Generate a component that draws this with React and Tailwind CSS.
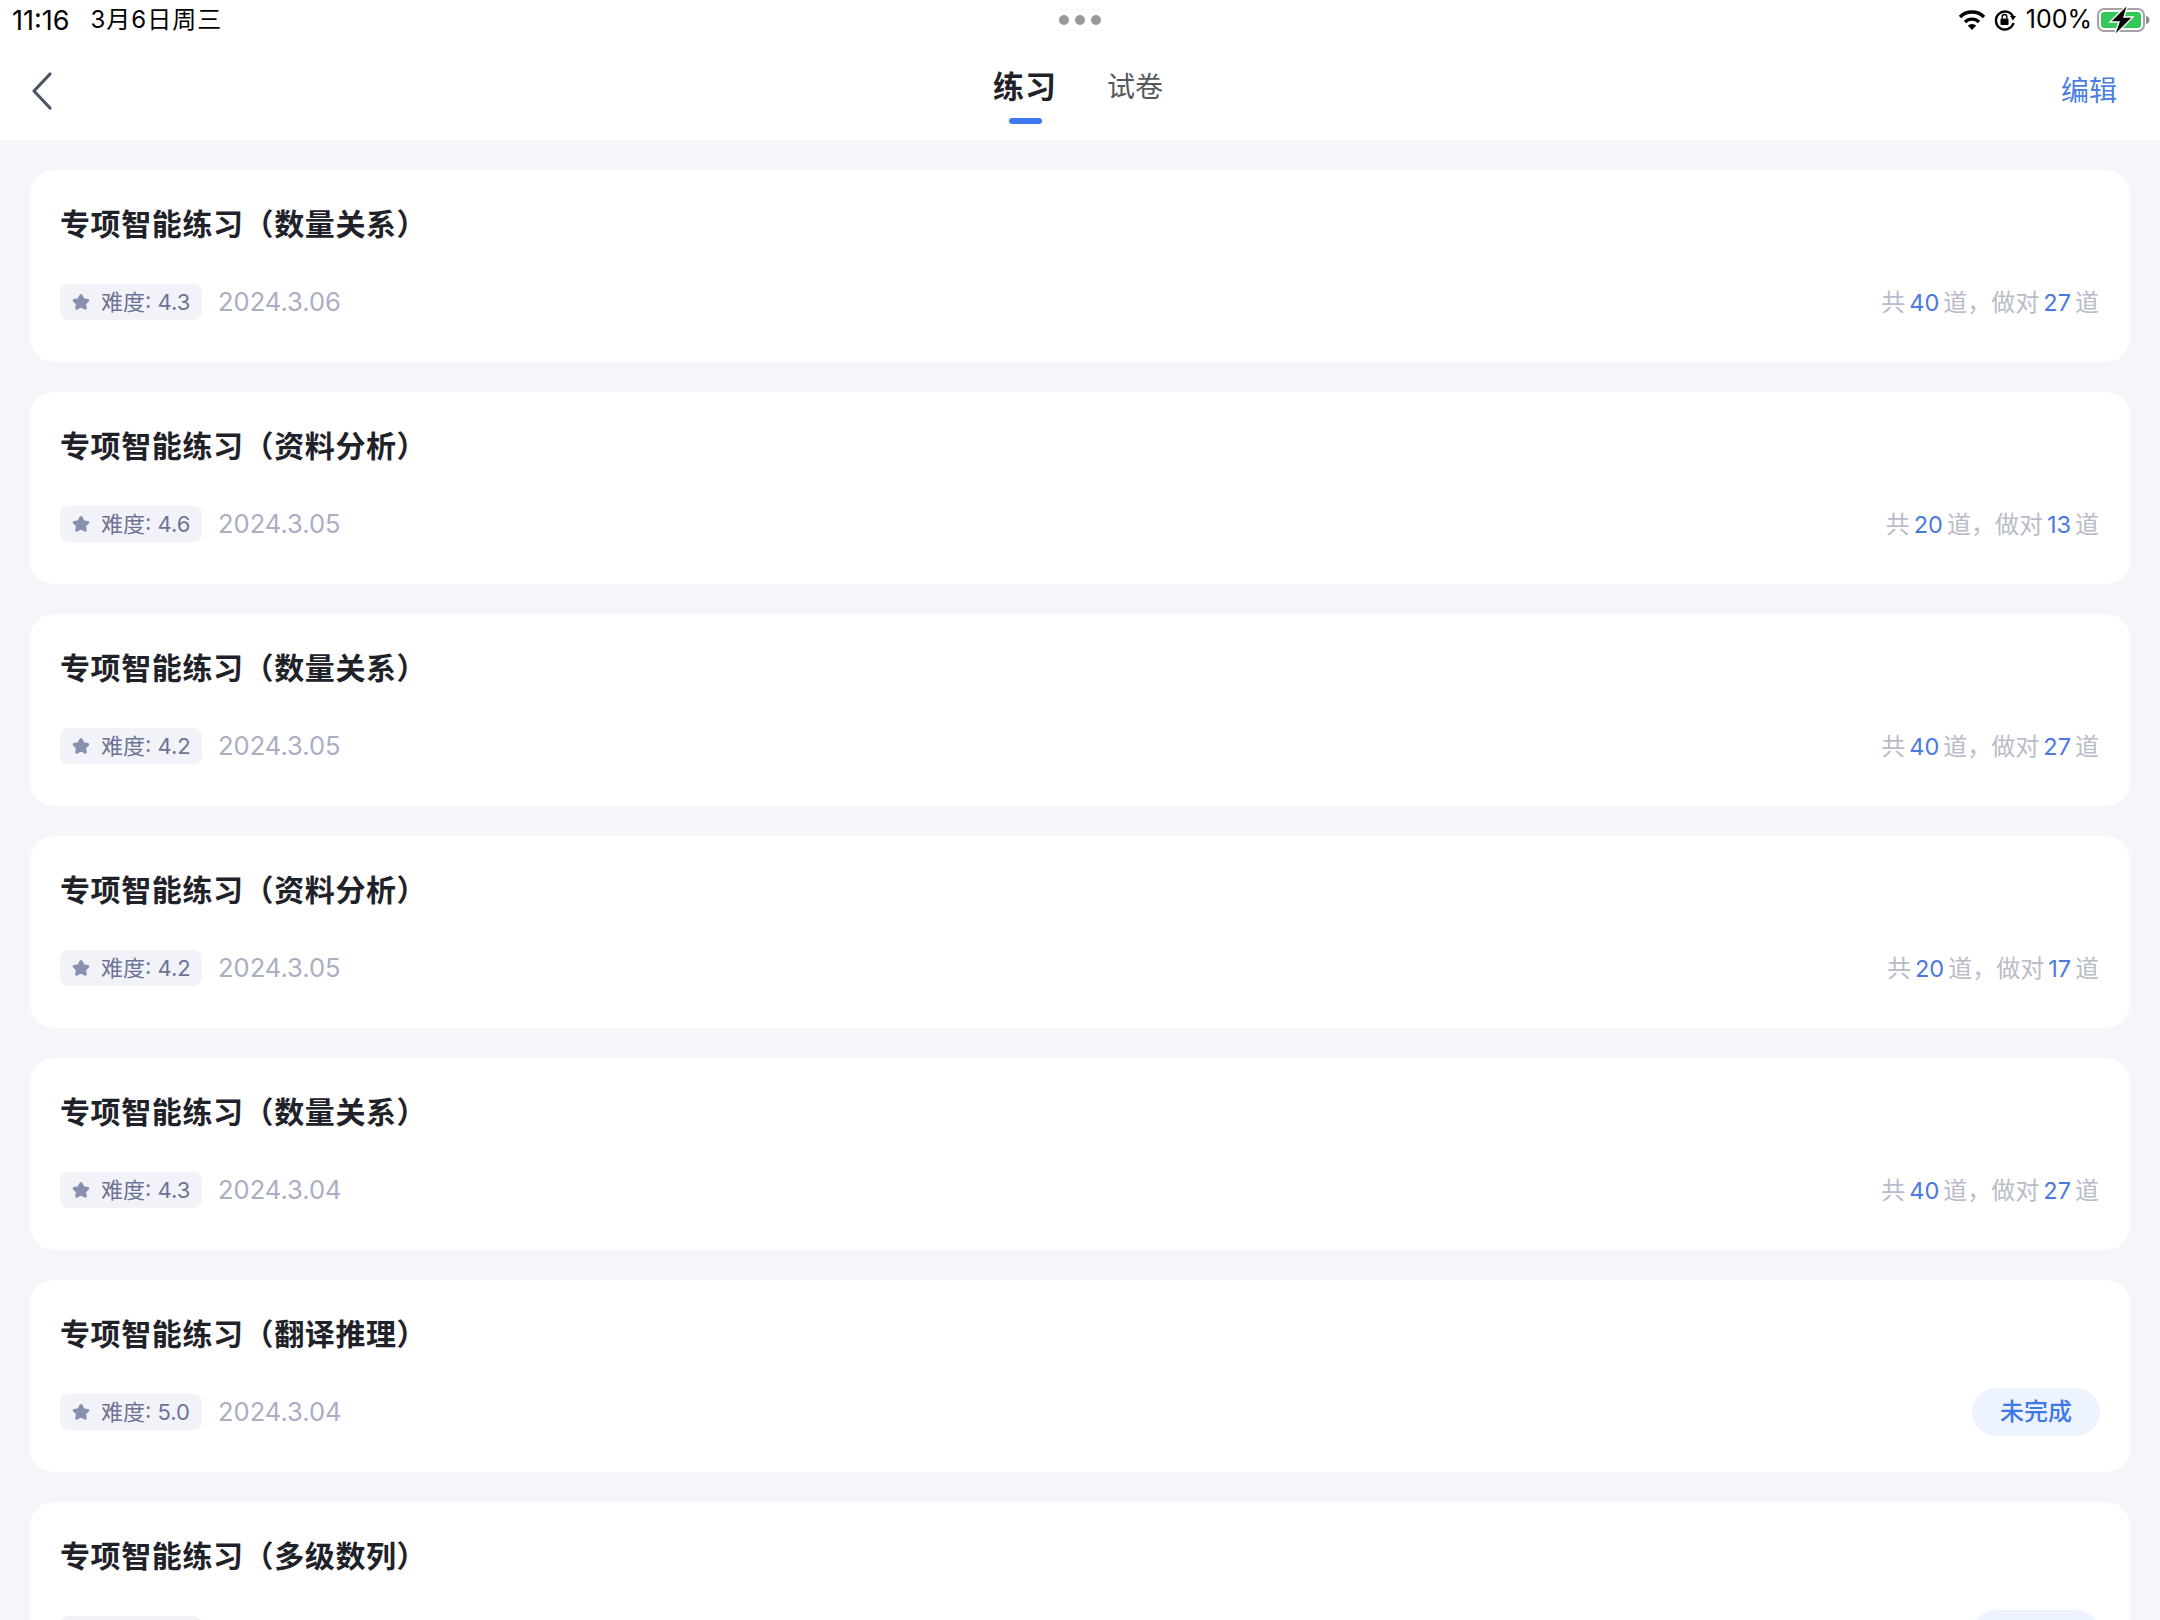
const lista = [
  { tema: '数量关系', nivel: '4.3', fecha: '2024.3.06', total: 40, ok: 27 },
  { tema: '资料分析', nivel: '4.6', fecha: '2024.3.05', total: 20, ok: 13 },
  { tema: '数量关系', nivel: '4.2', fecha: '2024.3.05', total: 40, ok: 27 },
  { tema: '资料分析', nivel: '4.2', fecha: '2024.3.05', total: 20, ok: 17 },
  { tema: '数量关系', nivel: '4.3', fecha: '2024.3.04', total: 40, ok: 27 },
  { tema: '翻译推理', nivel: '5.0', fecha: '2024.3.04' },
  { tema: '多级数列', nivel: '4.8', fecha: '2024.3.04' },
];

const StatusIcons = () => (
  <div className="flex items-center">
    <svg width="28" height="22" viewBox="0 0 28 22" className="mr-[7px]">
      <path d="M2 8 A17 17 0 0 1 26 8" fill="none" stroke="#000" strokeWidth="3.4" />
      <path d="M7 13 A10 10 0 0 1 21 13" fill="none" stroke="#000" strokeWidth="3.4" />
      <path d="M14 21 L9.8 16.6 A6 6 0 0 1 18.2 16.6 Z" fill="#000" />
    </svg>
    <svg width="24" height="24" viewBox="0 0 24 24" className="mr-[9px]">
      <path d="M20 8.5 A9 9 0 1 0 20.6 15" fill="none" stroke="#000" strokeWidth="2.4" />
      <path d="M17 8 L23 8 L20 12.5 Z" fill="#000" />
      <rect x="7.5" y="10.5" width="8" height="6.5" rx="1" fill="#000" />
      <path d="M9.2 10.5 V8.8 A2.3 2.3 0 0 1 13.8 8.8 V10.5" fill="none" stroke="#000" strokeWidth="1.4" />
    </svg>
    <span className="text-[25px] text-black mr-[5px]">100%</span>
    <svg width="54" height="32" viewBox="0 0 54 32">
      <rect x="1" y="5" width="46" height="22" rx="6" fill="none" stroke="#a3a3a3" strokeWidth="2" />
      <rect x="4" y="8" width="40" height="16" rx="3.5" fill="#34c759" />
      <path d="M49 12 C51.5 12.5 52.5 14 52.5 16 C52.5 18 51.5 19.500 49 20 Z" fill="#8e8e8e" />
      <path d="M31 0 L13 18 H22 L17 32 L36 13 H27 Z" fill="#000" stroke="#fff" strokeWidth="1.4" />
    </svg>
  </div>
);

const Tarjeta = ({ item }) => (
  <div className="h-[192px] shrink-0 rounded-[24px] bg-white px-[30px] pt-[37px]">
    <h2 className="text-[30px] leading-[34px] font-semibold text-[#1f2329] tracking-[0.6px]">
      专项智能练习（{item.tema}）
    </h2>
    <div className="mt-[37px] flex h-[48px] items-center justify-between">
      <div className="flex items-center">
        <div className="flex h-[36px] w-[142px] items-center rounded-[8px] bg-[#f2f3f8] pl-[11px]">
          <svg width="20" height="20" viewBox="0 0 20 20">
            <path
              d="M10 3.500 L12.200 7.800 L16.800 8.400 L13.500 11.600 L14.300 16.200 L10 14 L5.700 16.200 L6.500 11.600 L3.200 8.400 L7.800 7.800 Z"
              fill="#8890b0"
              stroke="#8890b0"
              strokeWidth="3"
              strokeLinejoin="round"
            />
          </svg>
          <span className="ml-[10px] text-[22px] leading-none text-[#6d7396]">难度: {item.nivel}</span>
        </div>
        <span className="ml-[16px] text-[25.500px] leading-none text-[#a9aec4]">{item.fecha}</span>
      </div>
      {item.total ? (
        <div className="mr-[1px] mt-[2px] flex items-center text-[24px] leading-none text-[#b9bcc8]">
          <span>共</span>
          <span className="mx-[4px] text-[23.500px] text-[#4a7ae0]">{item.total}</span>
          <span>道，</span>
          <span>做对</span>
          <span className="mx-[4px] text-[23.500px] text-[#4a7ae0]">{item.ok}</span>
          <span>道</span>
        </div>
      ) : (
        <span className="flex h-[48px] w-[128px] items-center justify-center rounded-full bg-[#eef4ff] text-[24px] font-medium text-[#3f78ea]">
          未完成
        </span>
      )}
    </div>
  </div>
);

export default function App() {
  return (
    <div
      className="flex h-[1620px] flex-col overflow-hidden bg-[#f5f6fa]"
      style={{ fontFamily: 'Inter, "Noto Sans CJK SC", sans-serif' }}
    >
      <header className="h-[140px] shrink-0 bg-white">
        <div className="flex h-[40px] items-center pl-[12px] pr-[9px] text-black">
          <div className="flex w-[1047px] items-center leading-none">
            <span className="text-[27px]">11:16</span>
            <span className="ml-[21px] text-[24px] tracking-[1px]">3月6日周三</span>
          </div>
          <div className="flex gap-[6px]">
            <span className="h-[10px] w-[10px] rounded-full bg-[#999999]" />
            <span className="h-[10px] w-[10px] rounded-full bg-[#999999]" />
            <span className="h-[10px] w-[10px] rounded-full bg-[#999999]" />
          </div>
          <div className="ml-auto">
            <StatusIcons />
          </div>
        </div>
        <nav className="grid h-[100px] grid-cols-[993px_auto_1fr] items-start">
          <div className="pl-[30px] pt-[31px]">
            <svg width="24" height="40" viewBox="0 0 24 40">
              <path d="M20 3 L4 20 L20 37" fill="none" stroke="#4b5563" strokeWidth="3.2" strokeLinecap="round" strokeLinejoin="round" />
            </svg>
          </div>
          <div className="flex items-start gap-[50px] pt-[27px]">
            <div className="flex flex-col items-center">
              <span className="text-[31px] leading-[40px] font-semibold tracking-[1px] text-[#1f2329]">练习</span>
              <span className="mt-[11px] h-[6px] w-[33px] rounded-full bg-[#3d78f0]" />
            </div>
            <span className="text-[28px] leading-[40px] text-[#55595f]">试卷</span>
          </div>
          <div className="flex justify-end pr-[43px] pt-[30px]">
            <span className="text-[28px] leading-[42px] text-[#4a7fe0]">编辑</span>
          </div>
        </nav>
      </header>
      <main className="flex flex-col gap-[30px] px-[30px] pt-[30px]">
        {lista.map((item, i) => (
          <Tarjeta key={i} item={item} />
        ))}
      </main>
    </div>
  );
}
